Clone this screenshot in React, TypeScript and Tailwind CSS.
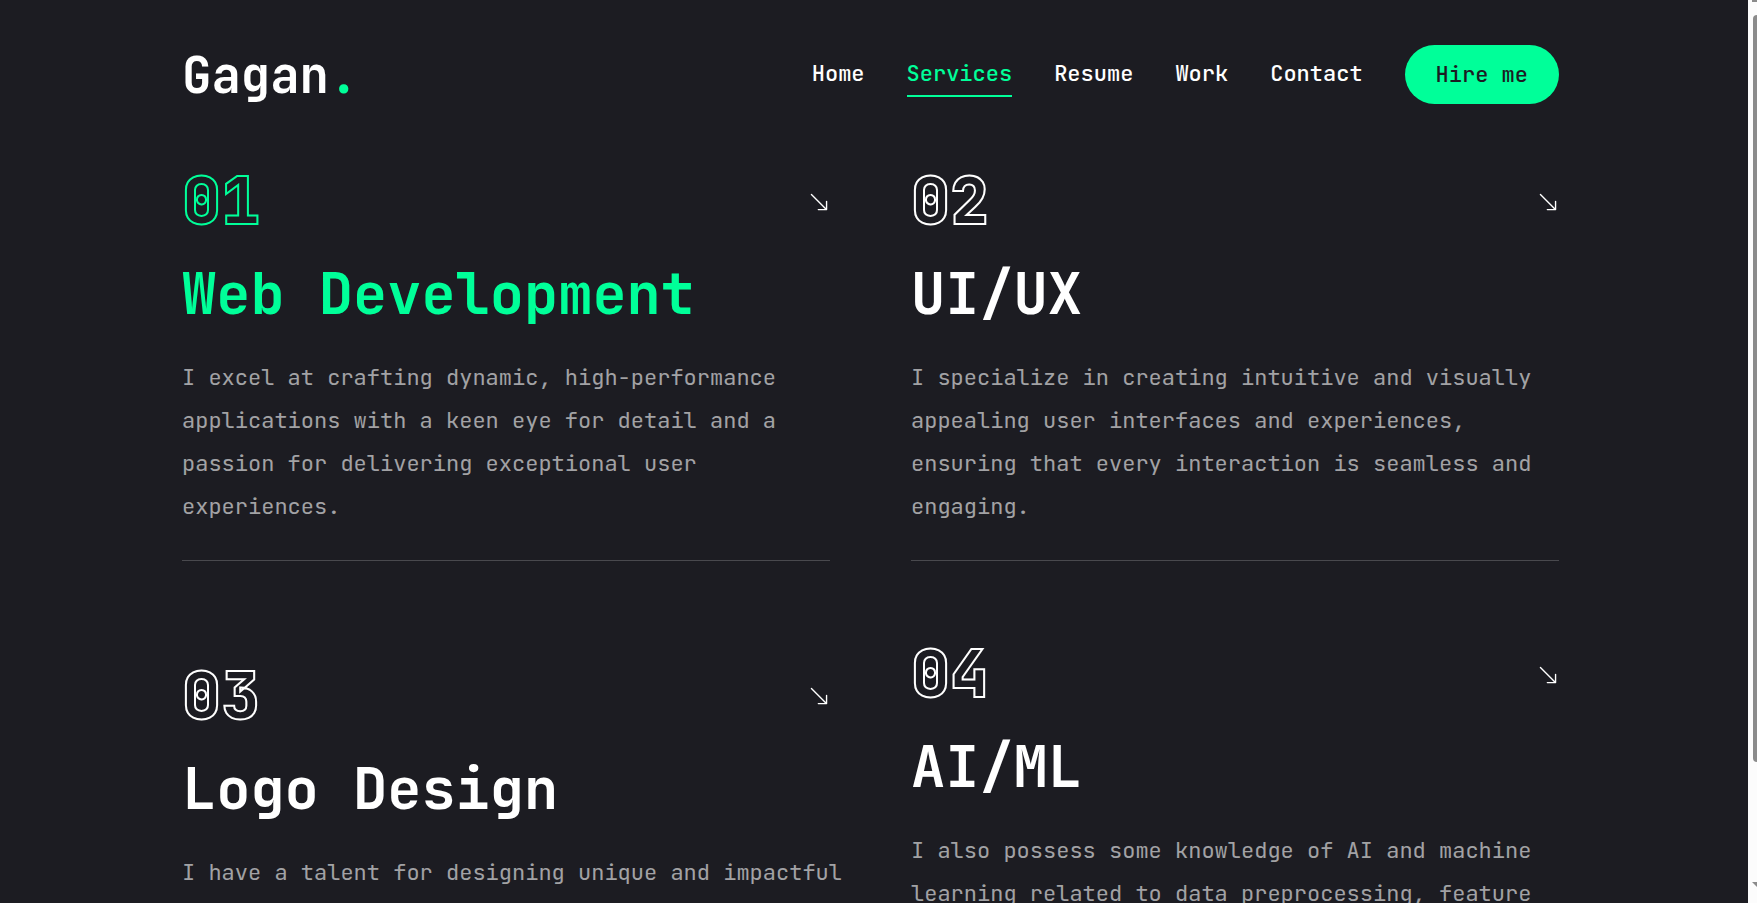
import { BsArrowDownRight } from "react-icons/bs";

const links = ["Home", "Services", "Resume", "Work", "Contact"];

const services = [
  {
    num: "01",
    title: "Web Development",
    description:
      "I excel at crafting dynamic, high-performance applications with a keen eye for detail and a passion for delivering exceptional user experiences.",
  },
  {
    num: "02",
    title: "UI/UX",
    description:
      "I specialize in creating intuitive and visually appealing user interfaces and experiences, ensuring that every interaction is seamless and engaging.",
  },
  {
    num: "03",
    title: "Logo Design",
    description:
      "I have a talent for designing unique and impactful logos that capture the essence of a brand and leave a lasting impression on every single audience.",
  },
  {
    num: "04",
    title: "AI/ML",
    description:
      "I also possess some knowledge of AI and machine learning related to data preprocessing, feature engineering, model training and evaluation, and building practical solutions with modern frameworks and tools.",
  },
];

function Header() {
  return (
    <header className="flex items-center justify-between pt-[45px]">
      <a href="#home" className="pt-0.5 text-[49px] leading-none font-bold">
        Gagan<span className="text-[#00ff99]">.</span>
      </a>
      <div className="flex items-center gap-[42px]">
        <nav className="flex gap-[42px]">
          {links.map((link) => (
            <a
              key={link}
              href={"#" + link.toLowerCase()}
              className={
                link === "Services"
                  ? "border-b-2 border-[#00ff99] leading-[43px] font-medium text-[#00ff99]"
                  : "border-b-2 border-transparent leading-[43px] font-medium"
              }
            >
              {link}
            </a>
          ))}
        </nav>
        <button className="h-[59px] rounded-full bg-[#00ff99] px-[31px] font-medium text-[#1c1c22]">
          Hire me
        </button>
      </div>
    </header>
  );
}

function ServiceCard({ num, title, description, active }: (typeof services)[number] & { active: boolean }) {
  return (
    <article className="flex flex-col justify-center gap-8">
      <div className="flex items-center justify-between">
        <div
          className={
            active
              ? "text-[65px] leading-none font-extrabold text-transparent [-webkit-text-stroke:2px_#00ff99]"
              : "text-[65px] leading-none font-extrabold text-transparent [-webkit-text-stroke:2px_#ffffff]"
          }
        >
          {num}
        </div>
        <a href="#contact" aria-label={title}>
          <BsArrowDownRight className="size-[22px]" />
        </a>
      </div>
      <h2
        className={
          active
            ? "pb-[3px] text-[57px] leading-[55px] font-bold text-[#00ff99]"
            : "pb-[3px] text-[57px] leading-[55px] font-bold text-white"
        }
      >
        {title}
      </h2>
      <p className="-mr-4 leading-[43px] text-white/60">{description}</p>
      <div className="border-b border-white/20" />
    </article>
  );
}

function Scrollbar() {
  return (
    <div aria-hidden="true" className="flex w-[9px] shrink-0 flex-col items-end overflow-hidden bg-[#fcfcfc]">
      <div className="h-[2px] w-[5px] bg-[#8b8b8b]" />
      <div className="mt-[13px] h-[747px] w-1 rounded-l-full bg-[#8b8b8b]" />
      <svg className="mt-auto mb-4 h-[5px] w-[5px]" viewBox="0 0 5 5">
        <path d="M0 0H5V5Z" fill="#8b8b8b" />
      </svg>
    </div>
  );
}

export default function App() {
  return (
    <div className="flex h-screen overflow-hidden bg-[#1c1c22] font-['JetBrains_Mono','DejaVu_Sans_Mono',monospace] text-[22px] text-white">
      <div className="min-w-0 flex-1 overflow-hidden pr-[7px]">
        <div className="mx-auto max-w-[1377px]">
          <Header />
          <main className="grid grid-cols-2 gap-[81px] pt-[65px]">
            {services.map((service, i) => (
              <ServiceCard key={service.num} {...service} active={i === 0} />
            ))}
          </main>
        </div>
      </div>
      <Scrollbar />
    </div>
  );
}
